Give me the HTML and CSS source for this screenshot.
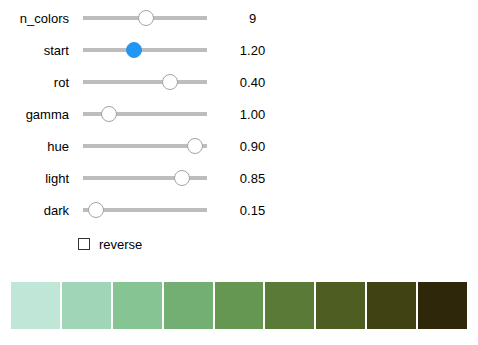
FILE: index.html
```html
<!DOCTYPE html>
<html lang="en">
<head>
<meta charset="UTF-8">
<title>choose_cubehelix_palette</title>
<link rel="stylesheet" href="styles.css">
</head>
<body>

<div class="controls">
  <div class="row">
    <span class="label">n_colors</span>
    <div class="track"><span class="thumb" style="left:51%"></span></div>
    <span class="value">9</span>
  </div>
  <div class="row">
    <span class="label">start</span>
    <div class="track"><span class="thumb active" style="left:41.1%"></span></div>
    <span class="value">1.20</span>
  </div>
  <div class="row">
    <span class="label">rot</span>
    <div class="track"><span class="thumb" style="left:69.8%"></span></div>
    <span class="value">0.40</span>
  </div>
  <div class="row">
    <span class="label">gamma</span>
    <div class="track"><span class="thumb" style="left:21%"></span></div>
    <span class="value">1.00</span>
  </div>
  <div class="row">
    <span class="label">hue</span>
    <div class="track"><span class="thumb" style="left:90.1%"></span></div>
    <span class="value">0.90</span>
  </div>
  <div class="row">
    <span class="label">light</span>
    <div class="track"><span class="thumb" style="left:79.8%"></span></div>
    <span class="value">0.85</span>
  </div>
  <div class="row">
    <span class="label">dark</span>
    <div class="track"><span class="thumb" style="left:10.7%"></span></div>
    <span class="value">0.15</span>
  </div>

  <label class="check-row">
    <span class="box"></span>
    <span>reverse</span>
  </label>
</div>

<div class="palette" id="palette"></div>

<script>
// cubehelix palette (seaborn style)
const opts = { n: 9, start: 1.2, rot: 0.4, gamma: 1.0, hue: 0.9, light: 0.85, dark: 0.15 };

function channel(x, p0, p1) {
  const xg = Math.pow(x, opts.gamma);
  const a = opts.hue * xg * (1 - xg) / 2;
  const phi = 2 * Math.PI * (opts.start / 3 + opts.rot * x);
  const v = xg + a * (p0 * Math.cos(phi) + p1 * Math.sin(phi));
  return Math.round(Math.min(1, Math.max(0, v)) * 255);
}

const palette = document.getElementById('palette');
for (let i = 0; i < opts.n; i++) {
  const x = opts.light + (opts.dark - opts.light) * i / (opts.n - 1);
  const r = channel(x, -0.14861, 1.78277);
  const g = channel(x, -0.29227, -0.90649);
  const b = channel(x, 1.97294, 0.0);
  const sw = document.createElement('div');
  sw.className = 'swatch';
  sw.style.background = `rgb(${r},${g},${b})`;
  palette.appendChild(sw);
}
</script>
</body>
</html>
```

FILE: styles.css
```css
body {
  margin: 0;
  background: #fff;
  color: #000;
  font-family: 'Liberation Sans', Arial, sans-serif;
  font-size: 13px;
}

.controls {
  padding-top: 2px;
}

.row {
  display: flex;
  align-items: center;
  height: 32px;
}

.label {
  width: 69px;
  text-align: right;
  margin-right: 14px;
}

.track {
  position: relative;
  width: 124px;
  height: 4px;
  background: #bdbdbd;
}

.thumb {
  position: absolute;
  top: 50%;
  width: 16px;
  height: 16px;
  box-sizing: border-box;
  margin: -8px 0 0 -8px;
  border: 1px solid #a3a3a3;
  border-radius: 50%;
  background: #fff;
}

.thumb.active {
  border-color: #2196f3;
  background: #2196f3;
}

.value {
  width: 91px;
  text-align: center;
}

.check-row {
  display: flex;
  align-items: center;
  height: 24px;
  margin: 6px 0 0 78px;
}

.box {
  width: 12px;
  height: 12px;
  border: 1px solid #333;
  box-sizing: border-box;
  margin-right: 9px;
}

.palette {
  display: flex;
  gap: 2px;
  width: 456px;
  height: 47px;
  margin: 26px 0 0 11px;
}

.swatch {
  flex: 1;
}
```
